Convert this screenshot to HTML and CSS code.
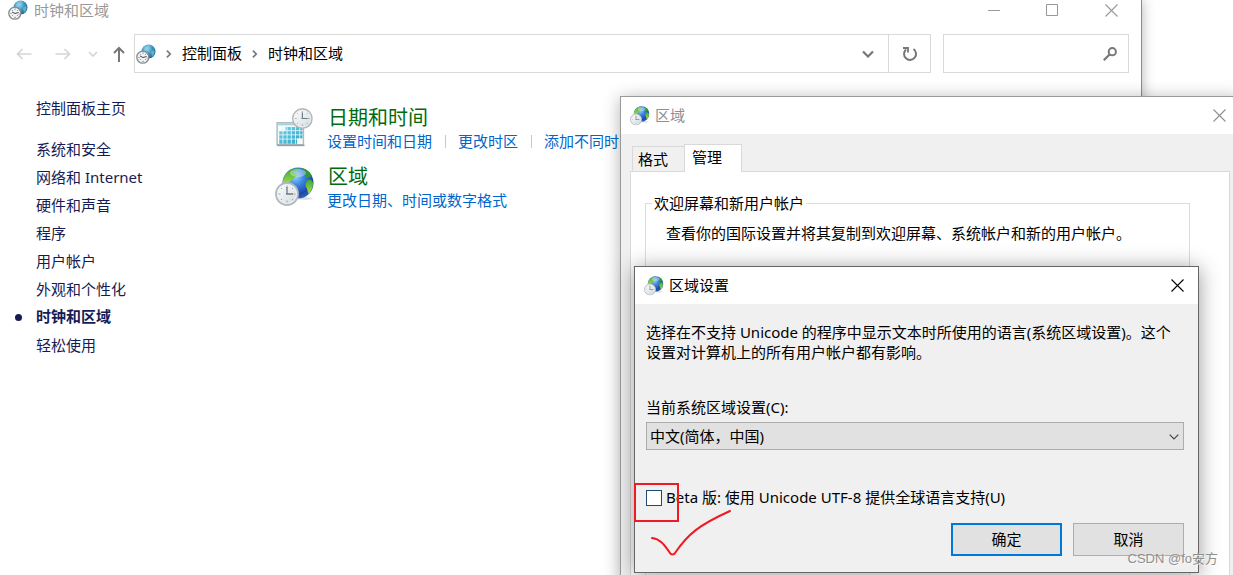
FILE: index.html
```
<!DOCTYPE html>
<html lang="zh-CN">
<head>
<meta charset="utf-8">
<title>时钟和区域</title>
<link rel="stylesheet" href="styles.css">
</head>
<body>
<svg class="defs" aria-hidden="true">
  <defs>
    <radialGradient id="g-sea" cx="0.42" cy="0.3" r="0.75">
      <stop offset="0" stop-color="#8fd4f7"/><stop offset="0.35" stop-color="#3f86e2"/><stop offset="0.75" stop-color="#1f46ab"/><stop offset="1" stop-color="#2c6fc0"/>
    </radialGradient>
    <linearGradient id="g-land" x1="0" y1="0" x2="0" y2="1">
      <stop offset="0" stop-color="#3fa834"/><stop offset="1" stop-color="#a6e04a"/>
    </linearGradient>
    <linearGradient id="g-face" x1="0" y1="0" x2="1" y2="1">
      <stop offset="0" stop-color="#ffffff"/><stop offset="1" stop-color="#cfd9df"/>
    </linearGradient>
    <radialGradient id="g-blue" cx="0.4" cy="0.3" r="0.8">
      <stop offset="0" stop-color="#9edbf0"/><stop offset="0.5" stop-color="#3a93bd"/><stop offset="1" stop-color="#14587f"/>
    </radialGradient>
    <linearGradient id="g-cal" x1="0" y1="0" x2="1" y2="1">
      <stop offset="0" stop-color="#6fd6ee"/><stop offset="1" stop-color="#2a9fc4"/>
    </linearGradient>
  </defs>
  <symbol id="clock" viewBox="0 0 24 24">
    <circle cx="12" cy="12" r="11" fill="url(#g-face)" stroke="#b3b9bc" stroke-width="1.800"/>
    <circle cx="12" cy="12" r="9.500" fill="none" stroke="#edf1f3"/>
    <path d="M12 3.500v2M12 18.500v2M3.500 12h2M18.500 12h2M6 6l1 1M17 17l1 1M18 6l-1 1M7 17l-1 1" stroke="#9aa6ae" stroke-width="1"/>
    <path d="M12 5v7.500M11 12h7" fill="none" stroke="#6c7a86" stroke-width="1.300"/>
  </symbol>
  <symbol id="globe-clock" viewBox="0 0 40 40">
    <ellipse cx="30" cy="31.500" rx="8" ry="1.500" fill="#000" opacity="0.12"/>
    <circle cx="23" cy="16" r="15.500" fill="url(#g-sea)"/>
    <path d="M8 14c1-6 5-10 9-12l7-1c-1 3-5 3-5 5l4 2c-2 3-6 3-7 6-1 2-4 1-5 4-2 1-3-1-3-4z" fill="url(#g-land)"/>
    <path d="M27 1c5 1 9 5 10 8l-5 2c-2-1-3-3-2-5z" fill="#2f9a3c"/>
    <path d="M33 13c3-1 4 0 5 3 0 5-2 8-4 11-2-2-1-5-3-7-1-3 0-5 2-7z" fill="url(#g-land)"/>
    <path d="M15 19c3 0 6 2 7 5l-2 6-5-2z" fill="#8fce4c"/>
    <ellipse cx="23" cy="6" rx="8" ry="4" fill="#fff" opacity="0.350"/>
    <use href="#clock" x="0" y="15" width="24" height="24"/>
  </symbol>
  <symbol id="region-blue" viewBox="0 0 20 20">
    <circle cx="12.500" cy="7.500" r="7" fill="url(#g-blue)"/>
    <path d="M8 5c2-3 4-4 6-4l-1 3-3 2-2 3zM15 8l3-2c1 3 0 5-2 7z" fill="#86cbe4" opacity="0.600"/>
    <circle cx="6.800" cy="13.200" r="6" fill="#f1f3f4" stroke="#868c90" stroke-width="1.300"/>
    <path d="M4 12l3 1.500 3.500-1" fill="none" stroke="#444b50" stroke-width="1"/>
    <path d="M7 8.500v1.200M7 16.800v1.200M2.500 13.500h1M10.500 14h1M4 10l.7.700M10 16l-.7-.7M4 16l.7-.7M10 10l-.7.700" stroke="#666" stroke-width="0.900"/>
  </symbol>
  <symbol id="calendar" viewBox="0 0 38 38">
    <path d="M2 14h25v21H2z" fill="#f8fbfc" stroke="#b0bcc2" stroke-width="1.400"/>
    <path d="M2 35.500h26" stroke="#93a1a9" stroke-width="1.500"/>
    <path d="M3 15.500h18" stroke="#9ed4e6" stroke-width="2"/>
    <path d="M10 18h16v11h-5v5H4V22h6z" fill="url(#g-cal)"/>
    <path d="M3 21.500h23M3 25.500h23M3 29.500h23M7.500 17v17M11.500 17v17M15.500 17v17M19.500 17v17M23.500 17v17" stroke="#e9f8fc" stroke-width="0.800"/>
    <use href="#clock" x="16" y="0" width="20" height="20"/>
  </symbol>
  <symbol id="cross" viewBox="0 0 13 13">
    <path d="M.5.500l12 12M12.500.500l-12 12" fill="none" stroke="currentColor" stroke-width="1.100"/>
  </symbol>
</svg>

<main class="desktop">
  <section class="window explorer" aria-label="时钟和区域">
    <header class="titlebar">
      <svg class="icon-small"><use href="#region-blue"/></svg>
      <h1 class="title">时钟和区域</h1>
      <div class="caption-buttons">
        <button aria-label="最小化"><svg class="glyph" viewBox="0 0 13 13"><path d="M1 6.500h12" stroke="currentColor"/></svg></button>
        <button aria-label="最大化"><svg class="glyph" viewBox="0 0 13 13"><path d="M.5.500h11v11H.5z" fill="none" stroke="currentColor"/></svg></button>
        <button aria-label="关闭"><svg class="glyph"><use href="#cross"/></svg></button>
      </div>
    </header>

    <div class="toolbar">
      <div class="history">
        <button class="faded" aria-label="后退"><svg width="16" height="12" viewBox="0 0 16 12"><path d="M15.500 6H1.500M6.500 1L1.500 6l5 5" fill="none" stroke="currentColor" stroke-width="1.700"/></svg></button>
        <button class="faded" aria-label="前进"><svg width="16" height="12" viewBox="0 0 16 12"><path d="M.5 6h14M9.500 1l5 5-5 5" fill="none" stroke="currentColor" stroke-width="1.700"/></svg></button>
        <button class="faded recent" aria-label="最近的位置"><svg width="10" height="6" viewBox="0 0 10 6"><path d="M1 1l4 4 4-4" fill="none" stroke="currentColor" stroke-width="1.700"/></svg></button>
        <button aria-label="上移"><svg width="12" height="16" viewBox="0 0 12 16"><path d="M6 16V2M1 7l5-5 5 5" fill="none" stroke="currentColor" stroke-width="2"/></svg></button>
      </div>
      <nav class="address" aria-label="地址">
        <div class="crumbs">
          <svg class="icon-small"><use href="#region-blue"/></svg>
          <svg class="chevron" viewBox="0 0 7 10"><path d="M1 1l4 4-4 4" fill="none" stroke="currentColor" stroke-width="1.900"/></svg>
          <a href="#">控制面板</a>
          <svg class="chevron" viewBox="0 0 7 10"><path d="M1 1l4 4-4 4" fill="none" stroke="currentColor" stroke-width="1.900"/></svg>
          <a href="#">时钟和区域</a>
          <button class="drop" aria-label="展开"><svg width="12" height="8" viewBox="0 0 12 8"><path d="M1 1.500l5 5 5-5" fill="none" stroke="currentColor" stroke-width="2.200"/></svg></button>
        </div>
        <button class="refresh" aria-label="刷新"><svg width="16" height="16" viewBox="0 0 16 16"><path d="M11.500 3a6 6 0 1 1-7.500.500" fill="none" stroke="currentColor" stroke-width="2"/><path d="M1 2h5v4.500" fill="none" stroke="currentColor" stroke-width="1.800"/></svg></button>
      </nav>
      <div class="search">
        <input type="search" aria-label="搜索">
        <svg width="14" height="14" viewBox="0 0 14 14"><circle cx="9.300" cy="4.700" r="3.600" fill="none" stroke="currentColor" stroke-width="2"/><path d="M6.500 7.500L.8 13.200" stroke="currentColor" stroke-width="2.200"/></svg>
      </div>
    </div>

    <div class="explorer-body">
      <nav class="sidebar" aria-label="控制面板">
        <a class="home" href="#">控制面板主页</a>
        <ul>
          <li><a href="#">系统和安全</a></li>
          <li><a href="#">网络和 Internet</a></li>
          <li><a href="#">硬件和声音</a></li>
          <li><a href="#">程序</a></li>
          <li><a href="#">用户帐户</a></li>
          <li><a href="#">外观和个性化</a></li>
          <li class="current"><a href="#" aria-current="page">时钟和区域</a></li>
          <li><a href="#">轻松使用</a></li>
        </ul>
      </nav>
      <div class="categories">
        <article class="category">
          <svg class="icon-large"><use href="#calendar"/></svg>
          <div>
            <h2><a href="#">日期和时间</a></h2>
            <p class="tasks"><a href="#">设置时间和日期</a><a href="#">更改时区</a><a href="#">添加不同时区</a></p>
          </div>
        </article>
        <article class="category">
          <svg class="icon-large"><use href="#globe-clock"/></svg>
          <div>
            <h2><a href="#">区域</a></h2>
            <p class="tasks"><a href="#">更改日期、时间或数字格式</a></p>
          </div>
        </article>
      </div>
    </div>
  </section>

  <section class="window region" role="dialog" aria-label="区域">
    <header class="titlebar">
      <svg class="icon-small"><use href="#globe-clock"/></svg>
      <h2 class="title">区域</h2>
      <button class="close" aria-label="关闭"><svg class="glyph"><use href="#cross"/></svg></button>
    </header>
    <div class="region-body">
      <div class="tabs" role="tablist">
        <button class="tab" role="tab" aria-selected="false">格式</button>
        <button class="tab active" role="tab" aria-selected="true">管理</button>
      </div>
      <div class="panel" role="tabpanel">
        <fieldset>
          <legend>欢迎屏幕和新用户帐户</legend>
          <p>查看你的国际设置并将其复制到欢迎屏幕、系统帐户和新的用户帐户。</p>
        </fieldset>
      </div>
    </div>
  </section>

  <section class="window locale" role="dialog" aria-label="区域设置">
    <header class="titlebar">
      <svg class="icon-small"><use href="#globe-clock"/></svg>
      <h2 class="title">区域设置</h2>
      <button class="close" aria-label="关闭"><svg class="glyph"><use href="#cross"/></svg></button>
    </header>
    <form class="locale-body">
      <p>选择在不支持 Unicode 的程序中显示文本时所使用的语言(系统区域设置)。这个设置对计算机上的所有用户帐户都有影响。</p>
      <label class="field-label" for="locale">当前系统区域设置(C):</label>
      <div class="select">
        <select id="locale"><option>中文(简体，中国)</option></select>
        <svg class="select-arrow" viewBox="0 0 10 6"><path d="M.7.700L5 5 9.300.700" fill="none" stroke="#444" stroke-width="1.200"/></svg>
      </div>
      <div class="check">
        <input type="checkbox" id="utf8">
        <label for="utf8">Beta 版: 使用 Unicode UTF-8 提供全球语言支持(U)</label>
      </div>
      <div class="actions">
        <button type="button" class="primary">确定</button>
        <button type="button">取消</button>
      </div>
    </form>
    <div class="mark-box"></div>
    <svg class="mark-tick" viewBox="0 0 84 50"><path d="M3 29c9 1 13 8 18 15 1 2 4 2 5 0C39 25 50 16 81 2" fill="none" stroke="#ed1c24" stroke-width="2" stroke-linecap="round"/></svg>
  </section>

  <div class="watermark">CSDN @fo安方</div>
</main>
</body>
</html>
```
FILE: styles.css
```
* { box-sizing: border-box; }

body {
  margin: 0;
  background: #fff;
  color: #000;
  font: 15px/20px "Noto Sans", "Noto Sans CJK SC", sans-serif;
}

h1, h2, p, ul { margin: 0; padding: 0; font-weight: 400; }
ul { list-style: none; }
a { color: inherit; text-decoration: none; }
svg { display: block; flex: none; }

button, input, select {
  margin: 0;
  padding: 0;
  border: 0;
  border-radius: 0;
  background: none;
  color: inherit;
  font: inherit;
}

.defs { position: absolute; width: 0; height: 0; }

.desktop {
  position: relative;
  height: 100vh;
  overflow: hidden;
}

.window { position: absolute; background: #fff; }

.titlebar { display: flex; align-items: center; height: 37px; }
.title { padding-bottom: 2px; font-size: 15px; line-height: 20px; }
.icon-small { width: 20px; height: 20px; }
.icon-large { width: 40px; height: 40px; }
.glyph { width: 13px; height: 13px; }
.close { margin-left: auto; }

/* Control panel window */
.explorer {
  top: 0;
  bottom: -20px;
  left: 0;
  right: 91px;
  border-right: 1px solid #8c8c8c;
  box-shadow: 0 0 12px rgba(0, 0, 0, 0.3);
}
.explorer .titlebar { height: 20px; padding: 0 23px 0 8px; gap: 6px; color: #999; }
.explorer .title { padding-bottom: 0; }
.caption-buttons { display: flex; gap: 46px; margin-left: auto; }

.toolbar {
  display: flex;
  height: 39px;
  margin-top: 14px;
  padding-right: 12px;
  color: #777;
}
.history { display: flex; align-items: center; width: 134px; padding-left: 16px; gap: 23px; }
.history .faded { color: #d5d5d5; }
.history .recent { margin: 0 -8px 0 -6px; }

.address { display: flex; flex: 1; border: 1px solid #d9d9d9; }
.crumbs { display: flex; flex: 1; align-items: center; padding: 0 14px 0 1px; gap: 10px; }
.crumbs a { padding-bottom: 2px; color: #000; }
.chevron { width: 6px; height: 10px; }
.drop { margin-left: auto; }
.refresh { display: grid; place-items: center; width: 42px; border-left: 1px solid #d9d9d9; }

.search {
  display: flex;
  align-items: center;
  width: 186px;
  margin-left: 12px;
  padding: 0 11px;
  border: 1px solid #d9d9d9;
}
.search input { flex: 1; min-width: 0; height: 100%; outline: 0; }

.explorer-body { display: flex; padding-top: 25px; }
.sidebar { width: 275px; padding-left: 36px; color: #151c55; }
.sidebar a { display: block; line-height: 20px; }
.sidebar ul { margin-top: 17px; }
.sidebar li { padding: 4px 0; }
.sidebar .current { position: relative; padding: 3px 0 5px; font-weight: 700; }
.current::before {
  content: "";
  position: absolute;
  top: 11px;
  left: -21px;
  width: 7px;
  height: 7px;
  border-radius: 50%;
  background: #151c55;
}

.categories { display: grid; gap: 9px; align-content: start; padding-top: 5px; }
.category { display: flex; align-items: center; gap: 12px; height: 50px; color: #0066cc; }
.category h2 { padding-left: 1px; color: #006b0e; font-size: 20px; line-height: 26px; }
.tasks { display: flex; white-space: nowrap; line-height: 20px; }
.tasks a + a {
  margin-left: 13px;
  padding-left: 13px;
  background: linear-gradient(#c8c8c8, #c8c8c8) 0 4px / 1px 13px no-repeat;
}

/* Region dialog */
.region {
  top: 96px;
  bottom: -20px;
  left: 620px;
  right: -8px;
  display: flex;
  flex-direction: column;
  border: 1px solid #999;
  background: #f0f0f0;
  box-shadow: 0 2px 16px rgba(0, 0, 0, 0.3);
}
.region .titlebar { padding: 0 14px 0 9px; gap: 5px; background: #fff; color: #8f8f8f; }
.region-body { display: flex; flex: 1; flex-direction: column; padding: 10px 10px 0 9px; }
.tabs { display: flex; align-items: flex-end; padding-left: 2px; }
.tab {
  height: 25px;
  padding: 0 16px 0 5px;
  border: 1px solid #d9d9d9;
  border-width: 1px 0 0 1px;
}
.tab.active {
  position: relative;
  height: 28px;
  margin-bottom: -1px;
  padding: 0 19px 4px 7px;
  border-right-width: 1px;
  background: #fff;
}
.panel {
  display: flex;
  flex: 1;
  padding: 21px 39px 0 14px;
  border: 1px solid #d9d9d9;
  background: #fff;
}
fieldset { flex: 1; margin: 0; padding: 10px 20px; border: 1px solid #dcdcdc; }
legend { margin-left: -14px; padding: 0 2px; }

/* System locale dialog */
.locale {
  top: 266px;
  left: 634px;
  right: 34px;
  border: 1px solid #666;
  background: #f0f0f0;
  box-shadow: 0 2px 20px rgba(0, 0, 0, 0.4);
}
.locale .titlebar { padding: 0 14px 0 9px; gap: 5px; background: #fff; }
.locale-body { padding: 18px 14px 16px 11px; }
.field-label { display: block; margin-top: 35px; }
.select { position: relative; margin-top: 5px; }
.select select {
  display: block;
  width: 100%;
  height: 28px;
  padding: 0 24px 0 3px;
  border: 1px solid #adadad;
  background: #e1e1e1;
  appearance: none;
}
.select-arrow { position: absolute; top: 12px; right: 5px; width: 10px; height: 6px; }
.check { display: flex; align-items: center; gap: 4px; margin-top: 37px; }
.check label { padding-bottom: 2px; }
.check input {
  width: 16px;
  height: 16px;
  border: 1px solid #1c4a75;
  background: #fff;
  appearance: none;
}
.actions { display: flex; justify-content: flex-end; gap: 11px; margin-top: 14px; }
.actions button { width: 111px; height: 33px; padding-bottom: 2px; border: 1px solid #adadad; background: #e1e1e1; }
.actions .primary { border: 2px solid #0078d7; }

/* Red pen marks over the check box */
.mark-box {
  position: absolute;
  top: 216px;
  left: -1px;
  width: 45px;
  height: 39px;
  border: 2px solid #ed1c24;
}
.mark-tick { position: absolute; top: 242px; left: 14px; width: 84px; height: 50px; }

.watermark {
  position: absolute;
  right: 15px;
  bottom: 6px;
  color: #8f8f8f;
  font: 13px/20px "Liberation Sans", "Noto Sans CJK SC", sans-serif;
  text-shadow: 1px 1px 0 rgba(255, 255, 255, 0.7);
}
```
